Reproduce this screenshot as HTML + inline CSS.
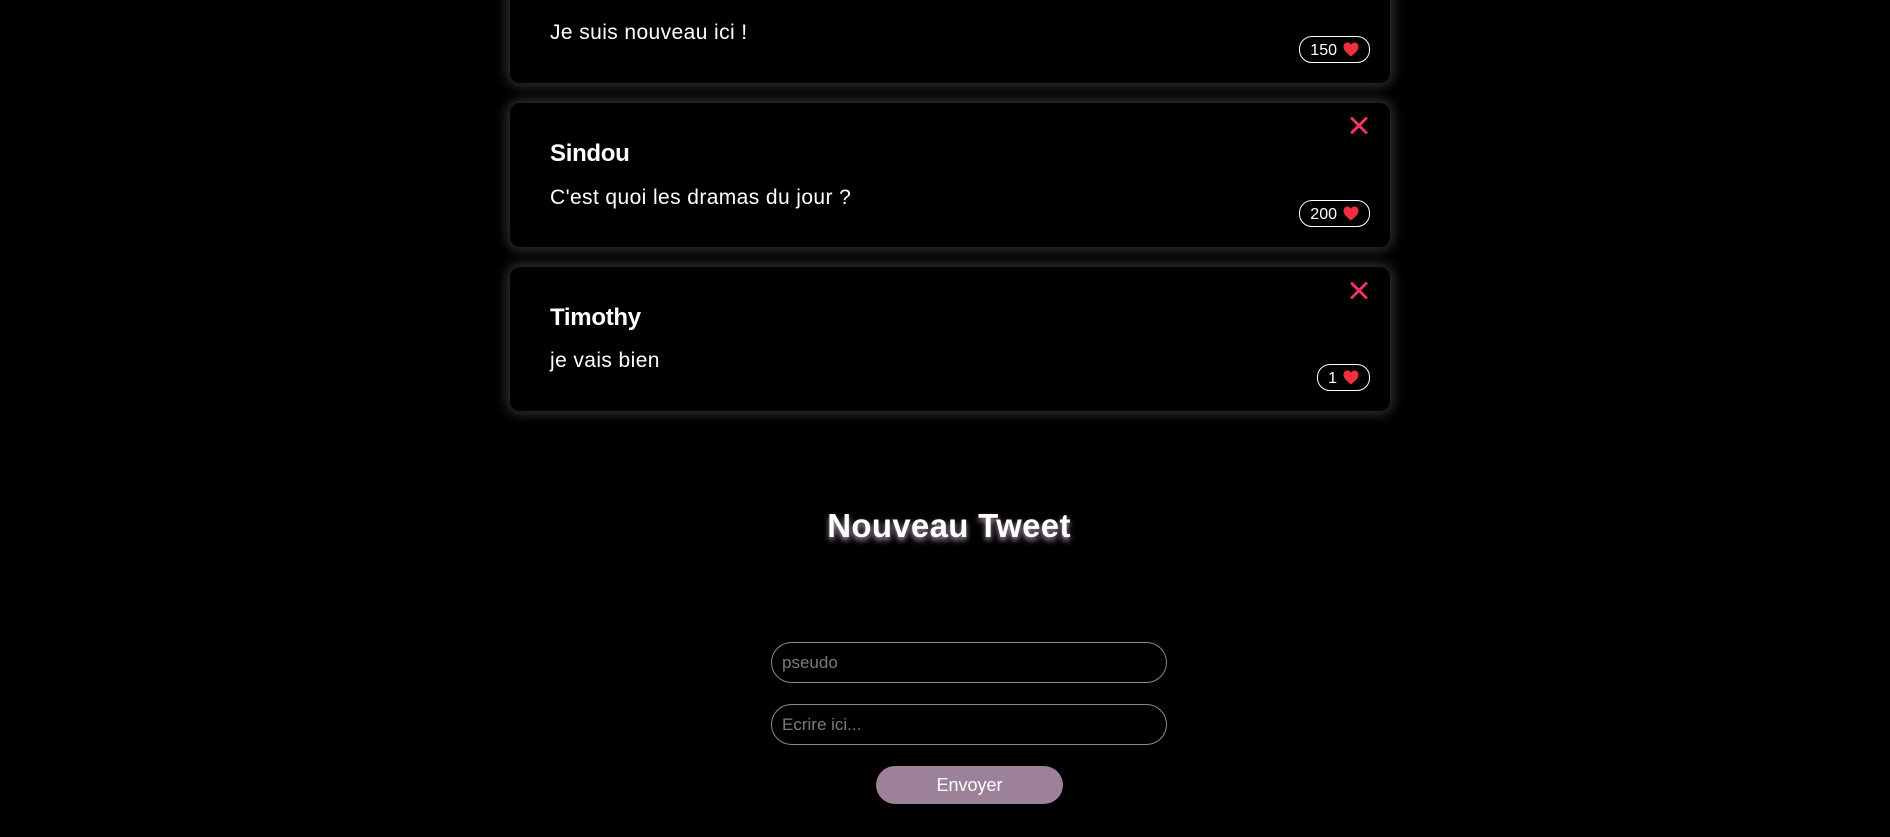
<!DOCTYPE html>
<html><head><meta charset="utf-8"><style>
html,body{margin:0;padding:0;background:#000;width:1890px;height:837px;overflow:hidden;font-family:"Liberation Sans",sans-serif;color:#fff;position:relative}
.card{position:absolute;left:510px;width:880px;height:144px;background:#000;border-radius:10px;box-shadow:0 0 12px 3px rgba(255,255,255,0.2)}
.name{position:absolute;left:40px;font-weight:bold;font-size:24px;letter-spacing:-0.3px}
.msg{position:absolute;left:40px;font-size:21px;letter-spacing:0.4px}
.x{position:absolute;right:22px;width:18px;height:17px}
.pill{position:absolute;right:20px;height:25px;border:1px solid #fff;border-radius:13px;font-size:16px;line-height:26px;padding:0 10px;display:flex;align-items:center;gap:6px}
.pill span{position:relative;top:1px}
.heart{width:16px;height:15px}
h1{position:absolute;left:4px;width:1890px;top:507px;margin:0;text-align:center;font-size:33px;letter-spacing:0.3px;font-weight:bold;text-shadow:0 3px 6px rgba(230,200,230,0.8)}
.inp{position:absolute;left:771px;width:384px;height:39px;border:1px solid #9b7f96;border-radius:21px;font-size:17px;color:#7a7a7a;line-height:39px;padding-left:10px;box-sizing:content-box}
.btn{position:absolute;left:876px;top:766px;width:187px;height:38px;background:#9d8199;border-radius:19px;text-align:center;line-height:38px;font-size:18px;color:#fff}
</style></head><body>
<svg width="0" height="0" style="position:absolute"><defs>
<symbol id="h" viewBox="0 0 16 15"><path d="M8 14.5 C3 10.5 0.5 8 0.5 4.6 C0.5 2.2 2.3 0.5 4.4 0.5 C6 0.5 7.3 1.4 8 2.7 C8.7 1.4 10 0.5 11.6 0.5 C13.7 0.5 15.5 2.2 15.5 4.6 C15.5 8 13 10.5 8 14.5Z" fill="#f0303c"/></symbol>
<symbol id="x" viewBox="0 0 18 17"><path d="M2 1.5 L16 15.5 M16 1.5 L2 15.5" stroke="#f0325f" stroke-width="3" stroke-linecap="round"/></symbol>
</defs></svg>

<div class="card" style="top:-61px">
<div class="msg" style="top:82px">Je suis nouveau ici !</div>
<div class="pill" style="top:97px"><span>150</span> <svg class="heart"><use href="#h"/></svg></div>
</div>

<div class="card" style="top:103px">
<svg class="x" style="top:14px"><use href="#x"/></svg>
<div class="name" style="top:37px">Sindou</div>
<div class="msg" style="top:83px">C'est quoi les dramas du jour ?</div>
<div class="pill" style="top:97px"><span>200</span> <svg class="heart"><use href="#h"/></svg></div>
</div>

<div class="card" style="top:267px">
<svg class="x" style="top:15px"><use href="#x"/></svg>
<div class="name" style="top:37px">Timothy</div>
<div class="msg" style="top:82px">je vais bien</div>
<div class="pill" style="top:97px"><span>1</span> <svg class="heart"><use href="#h"/></svg></div>
</div>

<h1>Nouveau Tweet</h1>
<div class="inp" style="top:642px">pseudo</div>
<div class="inp" style="top:704px">Ecrire ici...</div>
<div class="btn">Envoyer</div>
</body></html>
